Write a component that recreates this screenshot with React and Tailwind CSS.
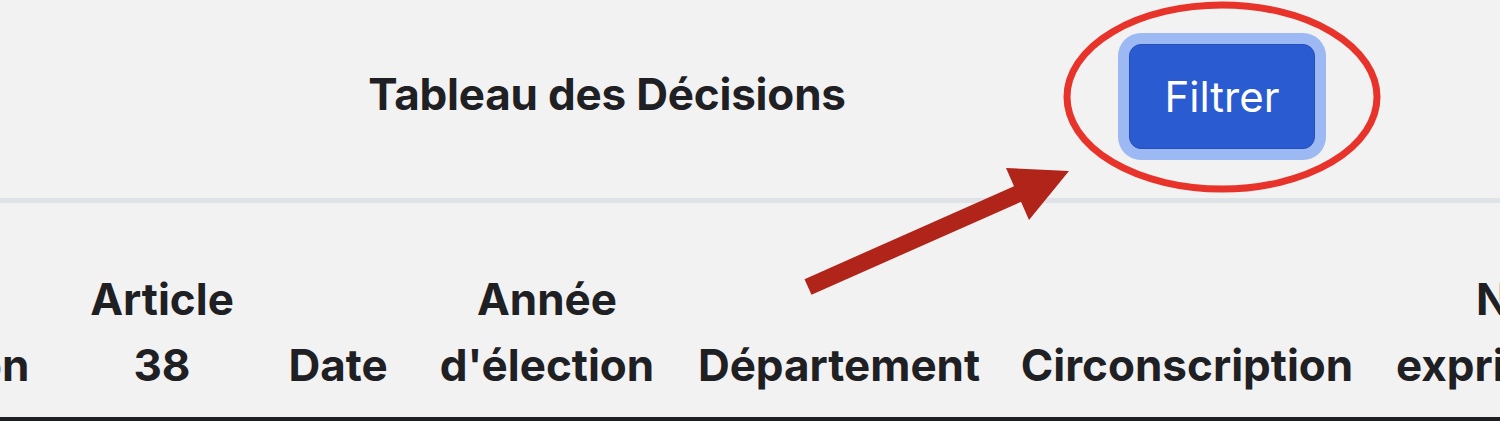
const COLS = [
  { id: 'decision', lines: ['', 'Décision'], cls: 'w-[224px] ml-[-176px]' },
  { id: 'article', lines: ['Article', '38'], cls: 'w-[212px] pl-[16px]' },
  { id: 'date', lines: ['', 'Date'], cls: 'w-[156px]' },
  { id: 'annee', lines: ['Année', "d'élection"], cls: 'w-[262px]' },
  { id: 'dept', lines: ['', 'Département'], cls: 'w-[322px]' },
  { id: 'circo', lines: ['', 'Circonscription'], cls: 'w-[374px]' },
]

function Annotations() {
  return (
    <svg className="pointer-events-none absolute left-0 top-0" width="1500" height="421" viewBox="0 0 1500 421">
      <ellipse cx="1222" cy="97" rx="155" ry="92" fill="none" stroke="#e8332a" strokeWidth="7" />
      <polygon
        fill="#b0241a"
        points="804.5,279.2 1014,186.2 1006,168 1069,171 1029,220 1021,201.8 811.5,294.8"
      />
    </svg>
  )
}

export default function App() {
  return (
    <div
      className="relative h-[421px] w-[1500px] overflow-hidden bg-[#f2f2f2] text-[#1f2023]"
      style={{ fontFamily: 'Inter, "Noto Sans", sans-serif' }}
    >
      <header className="flex h-[198px] items-center">
        <div className="mb-[11px] w-[1129px] pl-[85px] text-center text-[44px] font-bold leading-[66px] tracking-[-0.2px] whitespace-nowrap">
          Tableau des Décisions
        </div>
        <button className="mb-[6px] h-[105px] w-[186px] rounded-[12px] border border-[#2450bd] bg-[#2a5bd0] text-[42px] font-normal text-white ring-[11px] ring-[#9db9f3]">
          Filtrer
        </button>
      </header>
      <div className="h-[5px] bg-[#dfe3e7]" />

      <div className="flex items-end border-b-4 border-[#1e1f22] pb-[19px] pt-[63px] text-[44px] font-bold leading-[66px] whitespace-nowrap">
        {COLS.map((c) => (
          <div key={c.id} className={`flex-shrink-0 text-center ${c.cls}`}>
            <div className="h-[66px]">{c.lines[0]}</div>
            <div>{c.lines[1]}</div>
          </div>
        ))}
        <div className="w-[300px] flex-shrink-0 pl-[22px]">
          <div className="pl-[80px]">Nombre</div>
          <div>exprimés</div>
        </div>
      </div>

      <Annotations />
    </div>
  )
}
